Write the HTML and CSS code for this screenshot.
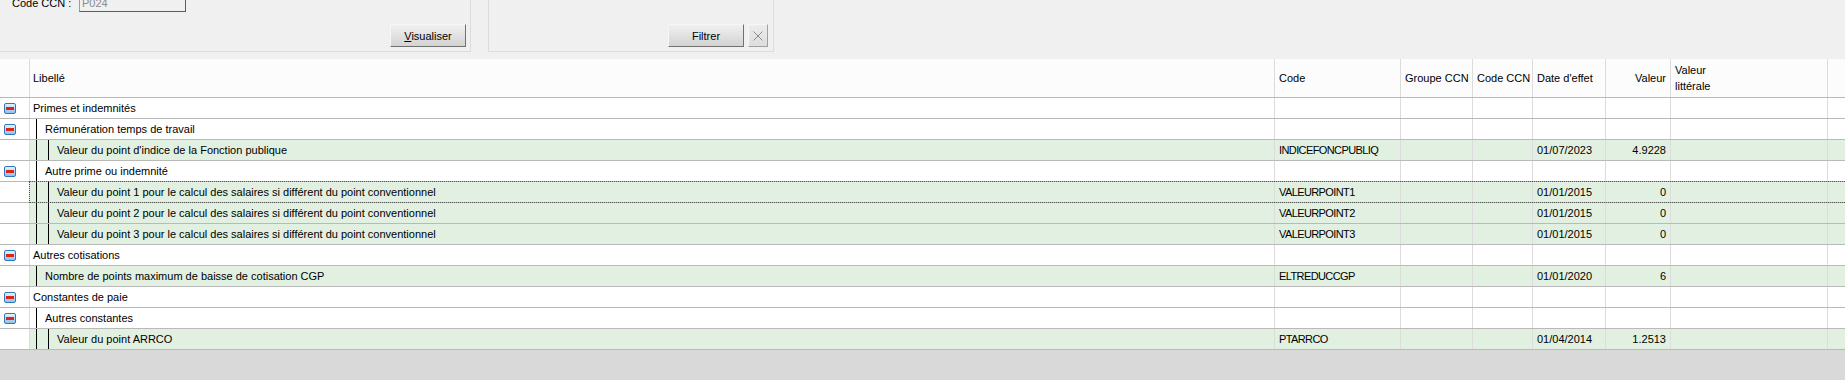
FILE: index.html
```html
<!DOCTYPE html>

<html>

<head>
  <meta charset="utf-8">
  <link rel="stylesheet" href="styles.css">
</head>

<body>

  <div class="filters">
    <div class="group group-ccn">
      <p class="field">
        <label for="codeCcn">Code CCN :</label>
        <input id="codeCcn" type="text" value="P024" disabled />
      </p>
      <p class="actions">
        <button type="button" class="btn"><u>V</u>isualiser</button>
      </p>
    </div>
    <div class="group group-filter">
      <p class="actions">
        <button type="button" class="btn">Filtrer</button>
        <button type="button" class="btn btn-clear" title="Effacer">
          <svg width="10" height="10" viewBox="0 0 10 10">
            <path d="M0.5 0.5 L9.5 9.5 M9.5 0.5 L0.5 9.5" stroke="#8c8c8c" stroke-width="1" fill="none" />
          </svg>
        </button>
      </p>
    </div>
  </div>

  <div class="grid">
    <div class="row head">
      <div class="cell"></div>
      <div class="cell lib">Libellé</div>
      <div class="cell">Code</div>
      <div class="cell">Groupe CCN</div>
      <div class="cell">Code CCN</div>
      <div class="cell">Date d'effet</div>
      <div class="cell num">Valeur</div>
      <div class="cell">Valeur<br>littérale</div>
      <div class="cell"></div>
    </div>

    <!-- Primes et indemnités -->
    <div class="row">
      <div class="cell ico"><span class="toggle"></span></div>
      <div class="cell lib">Primes et indemnités</div>
      <div class="cell"></div><div class="cell"></div><div class="cell"></div>
      <div class="cell"></div><div class="cell"></div><div class="cell"></div><div class="cell"></div>
    </div>
    <div class="row">
      <div class="cell ico"><span class="toggle"></span></div>
      <div class="cell lib indent"><span class="guide"></span><span class="txt">Rémunération temps de travail</span></div>
      <div class="cell"></div><div class="cell"></div><div class="cell"></div>
      <div class="cell"></div><div class="cell"></div><div class="cell"></div><div class="cell"></div>
    </div>
    <div class="row leaf">
      <div class="cell ico"></div>
      <div class="cell lib indent"><span class="guide"></span><span class="guide"></span><span class="txt">Valeur du point d'indice de la Fonction publique</span></div>
      <div class="cell code">INDICEFONCPUBLIQ</div>
      <div class="cell"></div><div class="cell"></div>
      <div class="cell">01/07/2023</div>
      <div class="cell num">4.9228</div>
      <div class="cell"></div><div class="cell"></div>
    </div>
    <div class="row">
      <div class="cell ico"><span class="toggle"></span></div>
      <div class="cell lib indent"><span class="guide"></span><span class="txt">Autre prime ou indemnité</span></div>
      <div class="cell"></div><div class="cell"></div><div class="cell"></div>
      <div class="cell"></div><div class="cell"></div><div class="cell"></div><div class="cell"></div>
    </div>
    <div class="row leaf selected">
      <div class="cell ico"></div>
      <div class="cell lib indent"><span class="guide"></span><span class="guide"></span><span class="txt">Valeur du point 1 pour le calcul des salaires si différent du point conventionnel</span></div>
      <div class="cell code">VALEURPOINT1</div>
      <div class="cell"></div><div class="cell"></div>
      <div class="cell">01/01/2015</div>
      <div class="cell num">0</div>
      <div class="cell"></div><div class="cell"></div>
    </div>
    <div class="row leaf">
      <div class="cell ico"></div>
      <div class="cell lib indent"><span class="guide"></span><span class="guide"></span><span class="txt">Valeur du point 2 pour le calcul des salaires si différent du point conventionnel</span></div>
      <div class="cell code">VALEURPOINT2</div>
      <div class="cell"></div><div class="cell"></div>
      <div class="cell">01/01/2015</div>
      <div class="cell num">0</div>
      <div class="cell"></div><div class="cell"></div>
    </div>
    <div class="row leaf">
      <div class="cell ico"></div>
      <div class="cell lib indent"><span class="guide"></span><span class="guide"></span><span class="txt">Valeur du point 3 pour le calcul des salaires si différent du point conventionnel</span></div>
      <div class="cell code">VALEURPOINT3</div>
      <div class="cell"></div><div class="cell"></div>
      <div class="cell">01/01/2015</div>
      <div class="cell num">0</div>
      <div class="cell"></div><div class="cell"></div>
    </div>

    <!-- Autres cotisations -->
    <div class="row">
      <div class="cell ico"><span class="toggle"></span></div>
      <div class="cell lib">Autres cotisations</div>
      <div class="cell"></div><div class="cell"></div><div class="cell"></div>
      <div class="cell"></div><div class="cell"></div><div class="cell"></div><div class="cell"></div>
    </div>
    <div class="row leaf">
      <div class="cell ico"></div>
      <div class="cell lib indent"><span class="guide"></span><span class="txt">Nombre de points maximum de baisse de cotisation CGP</span></div>
      <div class="cell code">ELTREDUCCGP</div>
      <div class="cell"></div><div class="cell"></div>
      <div class="cell">01/01/2020</div>
      <div class="cell num">6</div>
      <div class="cell"></div><div class="cell"></div>
    </div>

    <!-- Constantes de paie -->
    <div class="row">
      <div class="cell ico"><span class="toggle"></span></div>
      <div class="cell lib">Constantes de paie</div>
      <div class="cell"></div><div class="cell"></div><div class="cell"></div>
      <div class="cell"></div><div class="cell"></div><div class="cell"></div><div class="cell"></div>
    </div>
    <div class="row">
      <div class="cell ico"><span class="toggle"></span></div>
      <div class="cell lib indent"><span class="guide"></span><span class="txt">Autres constantes</span></div>
      <div class="cell"></div><div class="cell"></div><div class="cell"></div>
      <div class="cell"></div><div class="cell"></div><div class="cell"></div><div class="cell"></div>
    </div>
    <div class="row leaf">
      <div class="cell ico"></div>
      <div class="cell lib indent"><span class="guide"></span><span class="guide"></span><span class="txt">Valeur du point ARRCO</span></div>
      <div class="cell code">PTARRCO</div>
      <div class="cell"></div><div class="cell"></div>
      <div class="cell">01/04/2014</div>
      <div class="cell num">1.2513</div>
      <div class="cell"></div><div class="cell"></div>
    </div>
  </div>

</body>

</html>
```

FILE: styles.css
```css
body {
  margin: 0;
  background: #d9d9d9;
  color: #000;
  font-family: "Liberation Sans", Arial, sans-serif;
  font-size: 11px;
}

p {
  margin: 0;
}

/* Filter panels at the top */
.filters {
  display: flex;
  align-items: flex-start;
  height: 59px;
  box-sizing: border-box;
  padding-bottom: 7px;
  background: #f0f0f0;
}

.group {
  display: flex;
  flex-direction: column;
  height: 52px;
  box-sizing: border-box;
  border: 1px solid #dcdcdc;
  border-top: none;
  padding: 0 4px 4px 12px;
}

.group-ccn {
  width: 471px;
  border-left: none;
}

.group-filter {
  width: 286px;
  margin-left: 17px;
  padding-right: 5px;
}

.field {
  display: flex;
  align-items: center;
  margin-top: -6px;
}

.field label {
  width: 67px;
}

.field input {
  width: 107px;
  height: 18px;
  box-sizing: border-box;
  margin: 0;
  padding: 0 2px;
  border: 1px solid #3b6580;
  border-left-color: #8aa2b4;
  background: #f0f0f0;
  color: #8c8c8c;
  font: inherit;
}

.actions {
  display: flex;
  justify-content: flex-end;
  gap: 4px;
  margin-top: auto;
}

.btn {
  width: 76px;
  height: 23px;
  box-sizing: border-box;
  padding: 0;
  border: 1px solid;
  border-color: #f6f6f6 #707070 #707070 #f6f6f6;
  background: linear-gradient(#f0f0f0, #d3d3d3);
  color: #000;
  font: inherit;
}

.btn-clear {
  display: flex;
  align-items: center;
  justify-content: center;
  width: 20px;
  border-color: #f6f6f6 #a0a0a0 #a0a0a0 #f6f6f6;
  background: linear-gradient(#ececec, #dedede);
}

/* Tree grid */
.grid {
  background: #fff;
  overflow: hidden;
}

.row {
  display: grid;
  grid-template-columns: 30px 1245px 126px 72px 60px 73px 65px 157px 1fr;
  height: 21px;
  box-sizing: border-box;
  border-bottom: 1px solid #b9b9b9;
}

.row.head {
  height: 39px;
  background: #fcfcfc;
  line-height: 16px;
}

.cell {
  display: flex;
  align-items: center;
  padding: 0 4px;
  border-right: 1px solid #dcdcdc;
  white-space: nowrap;
  overflow: hidden;
}

.cell:last-child {
  border-right: none;
}

.num {
  justify-content: flex-end;
}

.code {
  letter-spacing: -0.6px;
}

.leaf .cell + .cell {
  background: #e2f0e2;
}

.ico {
  padding-left: 4px;
}

.toggle {
  display: flex;
  align-items: center;
  justify-content: center;
  width: 12px;
  height: 11px;
  box-sizing: border-box;
  border: 1px solid #2f78c0;
  border-radius: 2px;
  background: linear-gradient(#e4f1fc, #93c1ea);
}

.toggle:before {
  content: "";
  width: 8px;
  height: 3px;
  background: #d9261c;
}

.lib {
  padding-left: 3px;
}

.lib.indent {
  padding-left: 6px;
}

.guide {
  flex: none;
  align-self: stretch;
  width: 12px;
  box-sizing: border-box;
  border-left: 1px solid #000;
}

.guide ~ .txt {
  margin-left: -3px;
}

/* focus rectangle of the current row */
.selected {
  position: relative;
}

.selected:after {
  content: "";
  position: absolute;
  left: 29px;
  right: -2px;
  top: -1px;
  bottom: -1px;
  border: 1px dotted #555;
}
```
